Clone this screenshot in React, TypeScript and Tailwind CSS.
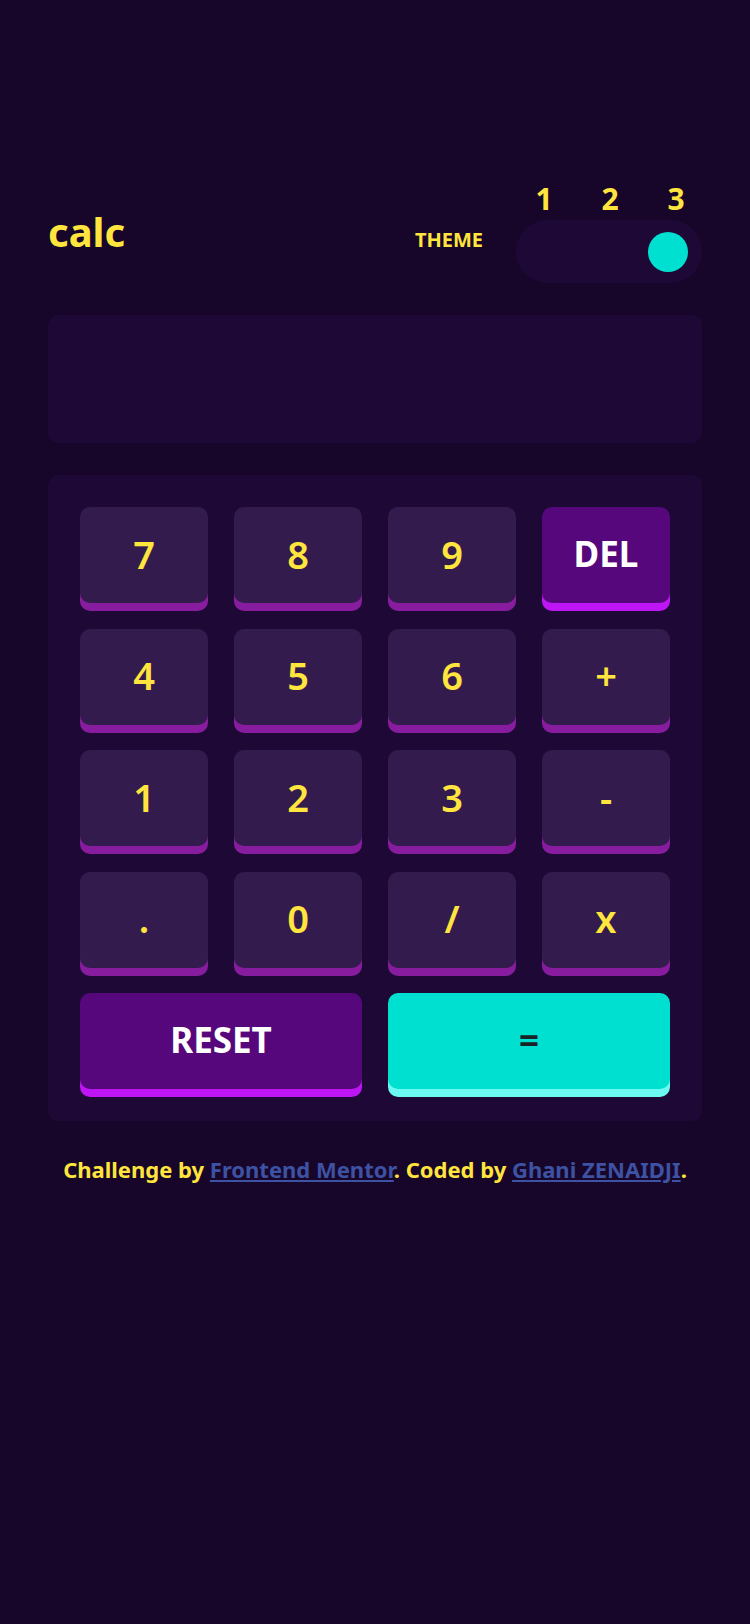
import React from 'react';

type Key = { label: string; kind?: 'num' | 'del' | 'reset' | 'equal' };

const keys: Key[] = [
  { label: '7' }, { label: '8' }, { label: '9' }, { label: 'DEL', kind: 'del' },
  { label: '4' }, { label: '5' }, { label: '6' }, { label: '+' },
  { label: '1' }, { label: '2' }, { label: '3' }, { label: '-' },
  { label: '.' }, { label: '0' }, { label: '/' }, { label: 'x' },
  { label: 'RESET', kind: 'reset' }, { label: '=', kind: 'equal' },
];

function KeyButton({ k }: { k: Key }) {
  if (k.kind === 'del' || k.kind === 'reset') {
    return (
      <button
        className={`flex h-24 items-center justify-center rounded-[10px] bg-[#56077c] pb-[3px] text-[35px] font-bold leading-none text-white shadow-[0_8px_0_#be15f4] ${
          k.kind === 'reset' ? 'col-span-2' : ''
        }`}
      >
        {k.label}
      </button>
    );
  }
  if (k.kind === 'equal') {
    return (
      <button className="col-span-2 flex h-24 items-center justify-center rounded-[10px] bg-[#00e0d1] pb-[3px] text-[35px] font-bold leading-none text-[#1a2327] shadow-[0_8px_0_#6cf9f1]">
        {k.label}
      </button>
    );
  }
  return (
    <button className="flex h-24 items-center justify-center rounded-[10px] bg-[#331c4d] pb-[3px] text-[38px] font-semibold leading-none text-[#ffe53d] shadow-[0_8px_0_#881c9e]">
      {k.label}
    </button>
  );
}

export default function App() {
  return (
    <main className="min-h-screen bg-[#17062a] pt-[184px] font-['Noto_Sans',sans-serif] text-[#ffe53d]">
      <div className="mx-auto w-[654px]">
        {/* header */}
        <header className="flex items-end justify-between">
          <h1 className="mb-[31px] text-[40px] font-bold leading-none">calc</h1>
          <div className="flex items-end">
            <span className="mb-[33px] mr-[33px] text-[20px] font-bold leading-none">THEME</span>
            <div>
              <div className="mb-[6px] flex justify-end gap-[46px] pr-[16px] text-[30px] font-bold leading-none">
                <span className="w-5 text-center">1</span>
                <span className="w-5 text-center">2</span>
                <span className="w-5 text-center">3</span>
              </div>
              <div className="flex h-[63px] w-[186px] items-center justify-end rounded-full bg-[#1e0936] pr-[14px]">
                <div className="size-10 rounded-full bg-[#00e0d1]" />
              </div>
            </div>
          </div>
        </header>

        {/* screen */}
        <div className="mt-8 h-32 rounded-[10px] bg-[#1e0936]" />

        {/* keypad */}
        <div className="mt-8 grid grid-cols-4 gap-x-[26px] gap-y-[25.5px] rounded-[10px] bg-[#1e0936] p-8">
          {keys.map((k) => (
            <KeyButton key={k.label} k={k} />
          ))}
        </div>

        <p className="mt-[37px] text-center text-[22px] font-bold leading-none">
          Challenge by{' '}
          <a href="#" className="text-[#3e52a3] underline">
            Frontend Mentor
          </a>
          . Coded by{' '}
          <a href="#" className="text-[#3e52a3] underline">
            Ghani ZENAIDJI
          </a>
          .
        </p>
      </div>
    </main>
  );
}
